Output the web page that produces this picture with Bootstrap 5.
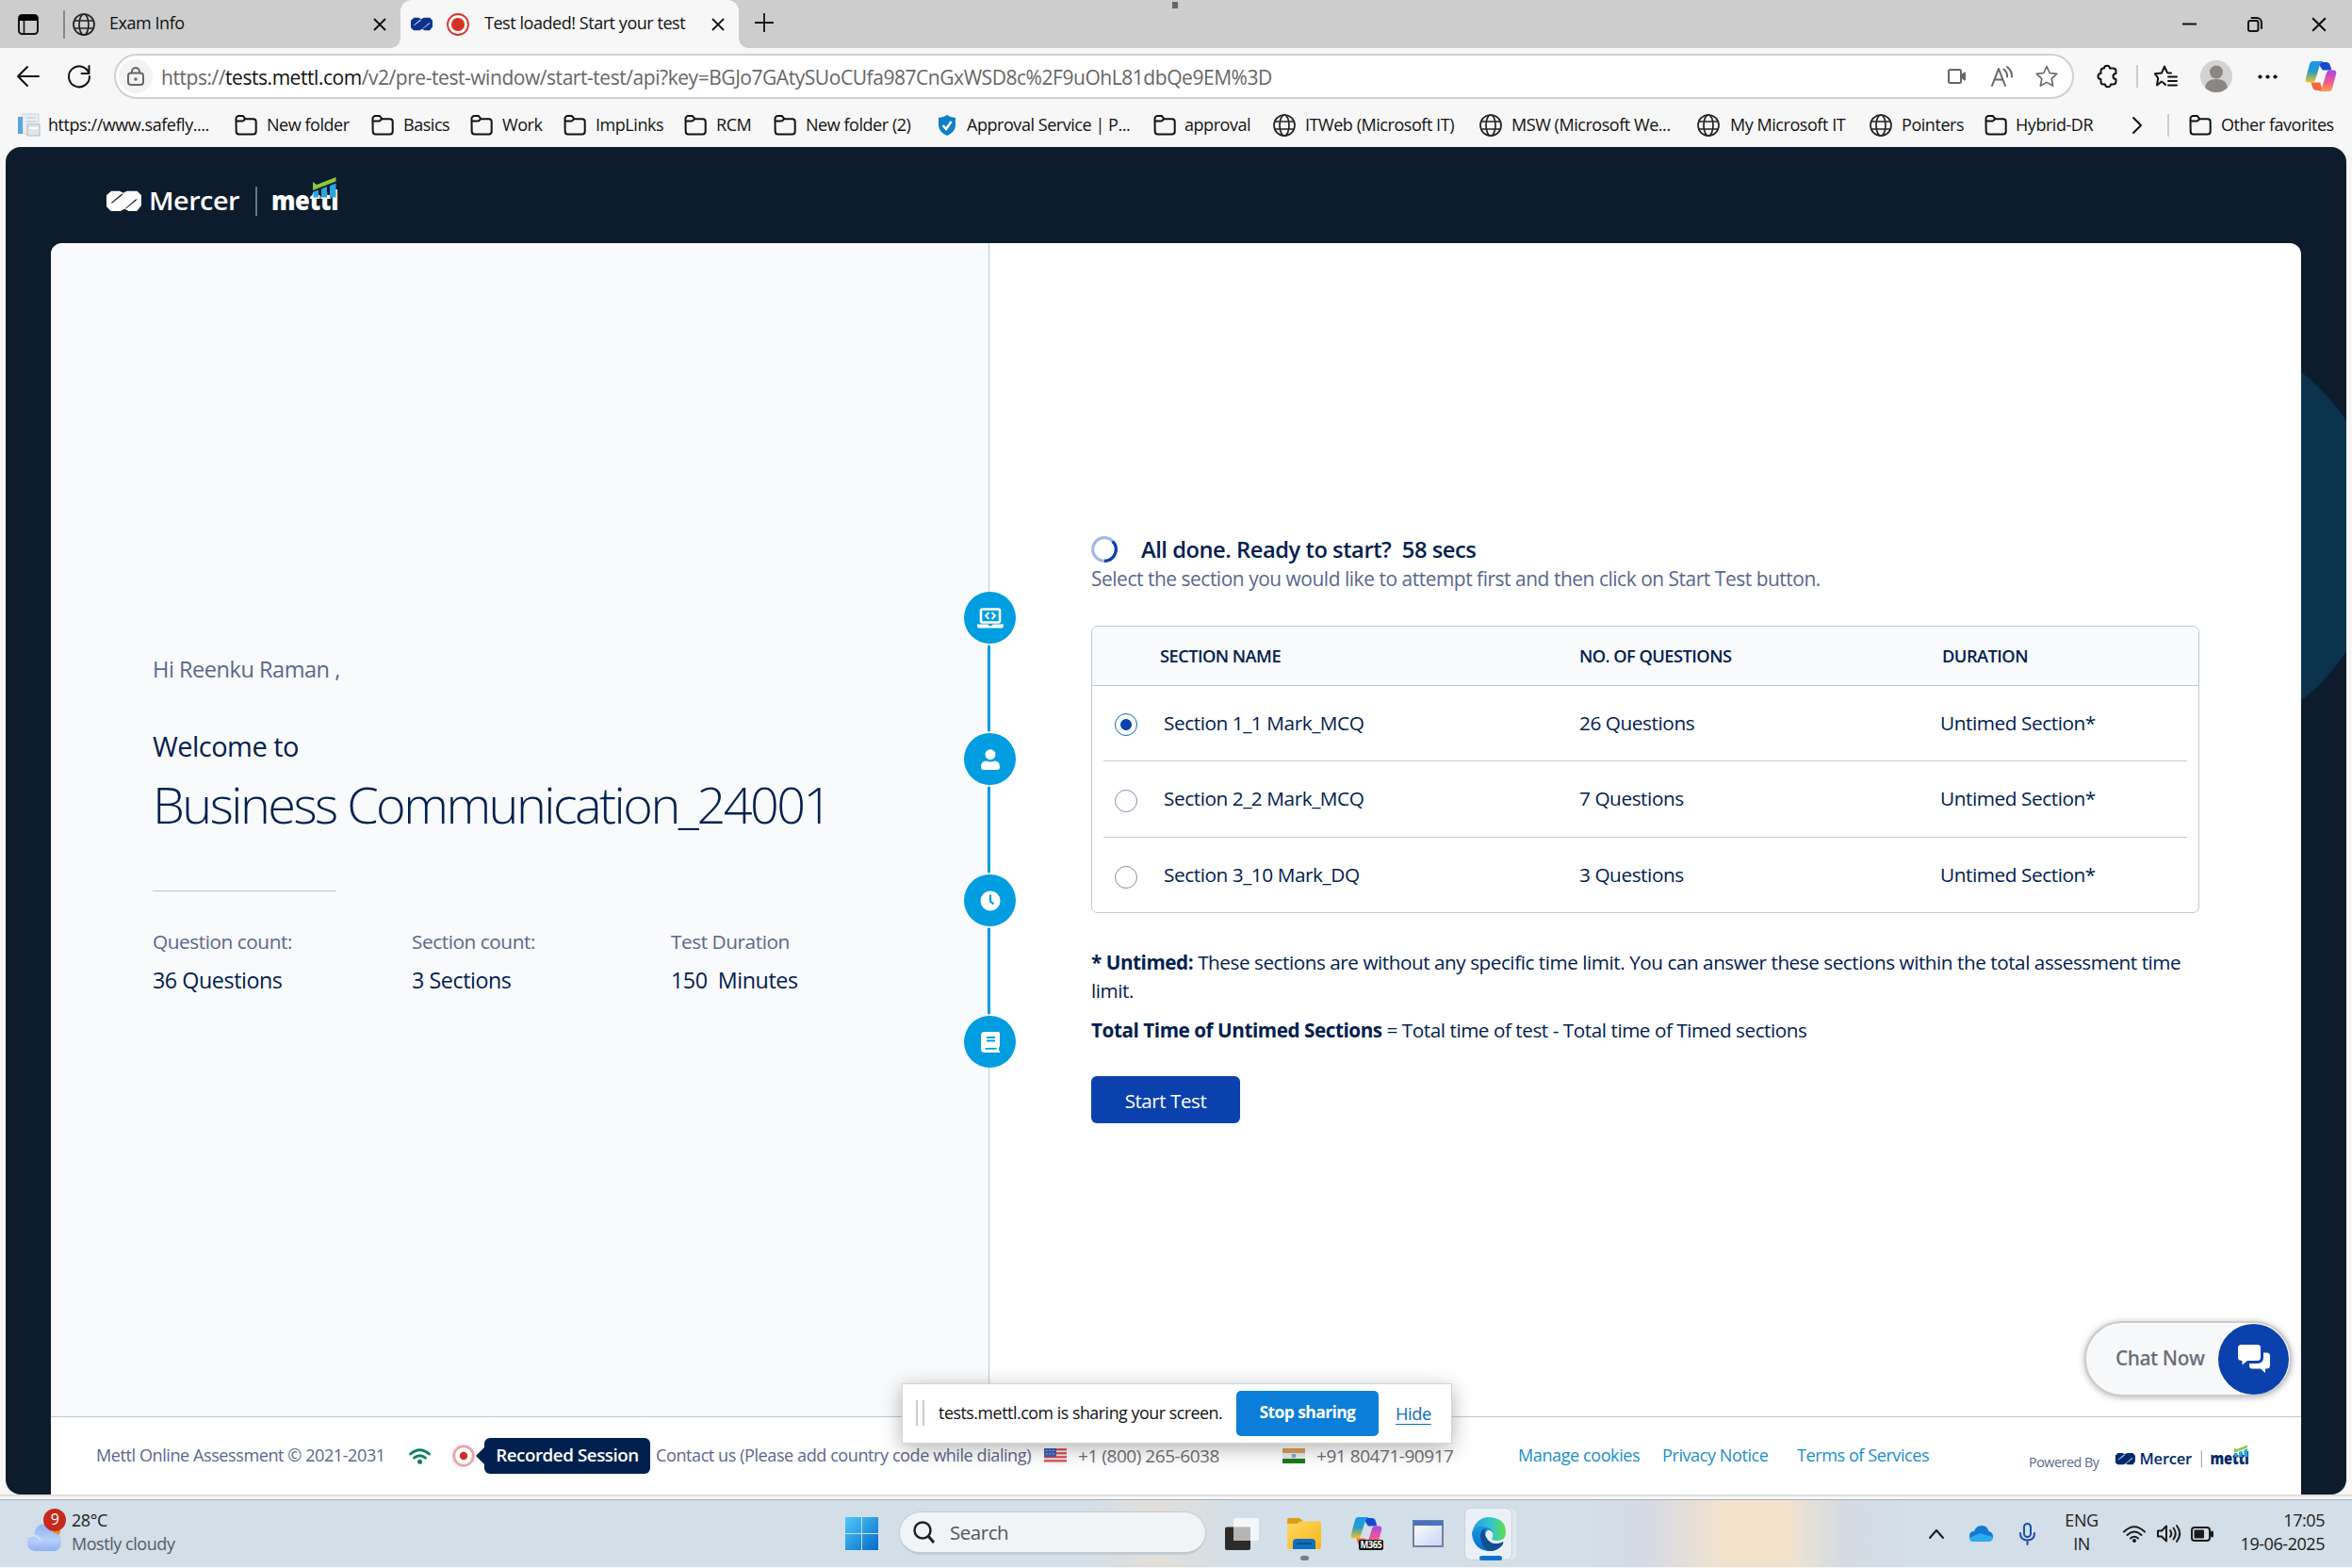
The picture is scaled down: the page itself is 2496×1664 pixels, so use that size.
<!DOCTYPE html>
<html lang="en">
<head>
<meta charset="utf-8">
<meta name="viewport" content="width=device-width, initial-scale=1">
<title>Test loaded! Start your test</title>
<link href="https://cdn.jsdelivr.net/npm/bootstrap@5.3.0/dist/css/bootstrap.min.css" rel="stylesheet">
<style>
  body { width: 2496px; height: 1664px; overflow: hidden; background: #f7f7f7; color: #00204e;
    font-family: "Open Sans", "Noto Sans", sans-serif; font-size: 18px; line-height: 1.3; letter-spacing: -.025em; white-space: nowrap; }
  svg { display: block; flex: none; overflow: visible; }
  .ln { fill: none; stroke: currentColor; stroke-width: 2; stroke-linecap: round; stroke-linejoin: round; }
  .lay { display: grid; align-items: center; justify-content: start; }
  .lay > * { min-width: 0; }

  /* browser chrome */
  .tabstrip { height: 51px; background: #cdcdcd; color: #111; grid-template-columns: 19px 48px 10px 39px 280px 29px 359px 17px 1515px 69px 68px 30px; }
  .tabstrip span:not(:empty) { margin-top: -2px; }
  .tab-live { height: 51px; background: #f7f7f7; border-radius: 12px 12px 0 0; grid-template-columns: 11px 38px 40px 241px 20px; }
  .tab-live::before, .tab-live::after { content: ""; position: absolute; bottom: 0; width: 10px; height: 10px; }
  .tab-live::before { left: -10px; background: radial-gradient(circle at 0 0, transparent 9.5px, #f7f7f7 10px); }
  .tab-live::after { right: -10px; background: radial-gradient(circle at 100% 0, transparent 9.5px, #f7f7f7 10px); }
  .top-mark { left: 1244px; top: 2px; width: 6px; height: 7px; background: #666; }
  .navrow { height: 60px; color: #111; grid-template-columns: 18px 54px 49px 2105px 41px 19px 49px 61px 50px 36px; }
  .omni { width: 2080px; height: 48px; border: 2px solid #d0d0d0; border-radius: 24px; background: #fff; color: #666; font-size: 21px; grid-template-columns: 3px 45px 1896px 46px 47px 26px; }
  .omni b { font-weight: 400; color: #111; }
  .lock { width: 36px; height: 36px; background: #f3f3f3; }
  .bookmarks { height: 44px; color: #111; padding-left: 18px; grid-template-columns:
    33px 198px 34px 111px 34px 71px 34px 65px 34px 94px 34px 61px 34px 140px 31px 198px 33px 94px 34px 185px 34px 197px 35px 148px 34px 88px 33px 124px 37px 23px 34px 118px; }
  .vbar { width: 2px; background: #ccc; }

  /* test page */
  .stage { height: 1430px; margin: 1px 6px 0; background: #0d1c2c; border-radius: 16px; overflow: hidden; padding: 0 48px; }
  .orb { width: 442px; height: 442px; left: 2079px; top: 192px; background: #0c334d; }
  .brand { height: 102px; padding: 24px 0 0 51px; }
  .sheet { height: 1328px; background: #fff; border-radius: 12px 12px 0 0; }
  .welcome { flex: 0 0 996px; background: #f9fafc; border-right: 1px solid #b9cad6; border-radius: 12px 0 0 0; padding: 435px 0 0 108px; }
  .muted-ink { color: #5a678c; }
  .hi { font-size: 23.5px; line-height: 34px; }
  .wel { font-size: 29px; line-height: 40px; margin-top: 45px; letter-spacing: -.018em; }
  .ttl { font-size: 54px; line-height: 70px; font-weight: 300; margin-top: 6px; letter-spacing: -.047em; }
  .short-rule { width: 195px; height: 1px; background: #b3c5d2; margin: 57px 0 36px; }
  .stats { grid-template-columns: 275px 275px 200px; }
  .stats .k { font-size: 20.8px; line-height: 34px; margin-bottom: 7px; }
  .stats .v { font-size: 23.3px; line-height: 34px; }
  .steps { left: 969px; top: 370px; width: 55px; }
  .stepdot { width: 55px; height: 55px; background: #009de0; color: #fff; }
  .stepline { width: 3px; height: 91px; margin: 2px 3px 2px 0; background: #009de0; }
  .start { padding: 310px 109px 0 108px; flex: 1; }
  .spin { width: 28px; height: 28px; margin-right: 25px; }
  .ready { font-size: 23.7px; font-weight: 600; line-height: 30px; }
  .pick { font-size: 20.9px; line-height: 30px; margin-top: 1px; }
  .sections { margin-top: 35px; width: 1176px; height: 305px; border: 1px solid #b9cad6; border-radius: 7px; font-size: 20.8px; overflow: hidden; }
  .sec-head { height: 63px; background: #f8fafc; border-bottom: 1px solid #b9cad6; font-size: 18.3px; font-weight: 600; padding: 0 0 1px 72px; grid-template-columns: 445px 385px 200px; letter-spacing: -.03em; }
  .sec-row { height: 80px; margin: 0 12px; border-bottom: 1px solid #b9cad6; padding: 3px 0 0 12px; grid-template-columns: 52px 441px 383px 200px; }
  .sec-row span { margin-top: -3px; }
  .sec-row:nth-child(3) { height: 81px; }
  .sec-row:last-child { border: 0; }
  .pickdot { appearance: none; width: 24px; height: 24px; border: 1px solid #8590a6; border-radius: 50%; margin: 0; background: #fff; }
  .pickdot:checked { border-color: #0f6ba0; background: radial-gradient(circle, #0b41ad 5.5px, #fff 6.3px); }
  .note { font-size: 20.7px; line-height: 30px; }
  .go { width: 158px; height: 50px; background: #0b41ad; color: #fff; border-radius: 6px; font-size: 20.5px; letter-spacing: -.02em; padding: 2px 0 0; border: 0; }
  .chat { right: 10px; top: 1144px; width: 220px; height: 80px; border-radius: 40px; background: #f8f9fb; border: 2px solid #ccc; box-shadow: 0 1px 7px rgba(0,0,0,.3); font-size: 20.8px; font-weight: 600; color: #6a6f78; padding: 0 1px 0 31px; }
  .chat-dot { width: 75px; height: 75px; background: #0b41ad; color: #fff; }
  .foot { height: 83px; border-top: 1px solid #b9cad6; font-size: 18.1px; padding-left: 48px;
    grid-template-columns: 332px 46px 216px 412px 36px 217px 36px 214px 153px 143px 246px 92px 145px; }
  .foot .tel { font-size: 19px; color: #6c6f75; }
  .foot a { color: #1b8fc9; text-decoration: none; }
  .rec-tip { left: 34px; top: -7px; width: 176px; height: 38px; border-radius: 6px; background: #002050; color: #fff; font-weight: 600; font-size: 18.8px; padding-bottom: 2px; }
  .rec-tip::before { content: ""; position: absolute; left: -9px; top: 9px; border: 10px solid transparent; border-left: 0; border-right-color: #002050; }
  .foot .powered { font-size: 14.3px; padding-top: 15px; }

  .share { left: 957px; top: 1468px; width: 584px; height: 64px; background: #fff; border: 1px solid #d5d5d5; box-shadow: 0 5px 22px rgba(0,0,0,.3); color: #111; font-size: 17.8px; grid-template-columns: 14px 24px 316px 169px 50px; padding-bottom: 1px; }
  .grip { width: 9px; height: 27px; border: solid #ccc; border-width: 0 2px; }
  .stop { width: 151px; height: 48px; background: #0a7ed8; color: #fff; border-radius: 5px; font-size: 17.5px; font-weight: 700; padding: 0 0 2px; border: 0; letter-spacing: -.035em; }
  .share a { color: #0f6cbd; font-size: 18.3px; text-underline-offset: 4px; }

  /* taskbar */
  .frame-edge { height: 6px; background: linear-gradient(#dedede 0 2px, #f7f7f7 2px 5px, #a9aeb2 5px); }
  .taskbar { height: 71px; color: #1b1b1b; padding-left: 29px;
    background: linear-gradient(90deg, transparent 1690px, rgba(214,214,228,.6) 1745px, #f3e3cd 1830px, #f3e3cd 1895px, rgba(214,214,224,.5) 1955px, transparent 2020px),
      linear-gradient(90deg, transparent 1160px, #e2dfda 1225px, transparent 1310px), #d2dee8;
    grid-template-columns: 47px 821px 57px 346px 66px 66px 67px 55px 493px 43px 53px 48px 62px 36px 36px 32px 110px; }
  .searchpill { width: 326px; height: 46px; margin-top: -1px; border-radius: 23px; background: #f1f4f7; border: 2px solid #c3ccd3; border-width: 1px 1px 3px; color: #555; font-size: 20.5px; padding-left: 14px; gap: 16px; }
  .alert-count { left: 17px; top: -7px; width: 24px; height: 24px; background: #c42b1c; color: #fff; font-size: 16px; }
  .two { line-height: 25px; margin-top: -4px; }
  .edge-tile { width: 51px; height: 56px; border-radius: 7px; background: #eaf0f6; border: 1px solid #c8d2dc; box-shadow: 5px 0 0 -1px #e0e8ef; }
  .run-pill { left: 15px; bottom: -1px; width: 24px; height: 5px; background: #0a74d0; border-radius: 3px; }
  .run-dot { left: 14px; top: 40px; width: 9px; height: 5px; background: #777f86; border-radius: 3px; }
</style>
</head>
<body class="d-flex flex-column">
<svg width="0" height="0" class="position-absolute">
  <defs>
    <symbol id="globe" viewBox="0 0 24 24"><g fill="none" stroke="#222" stroke-width="1.7"><circle cx="12" cy="12" r="11"/><ellipse cx="12" cy="12" rx="5" ry="11"/><path d="M2 8h20M2 16h20"/></g></symbol>
    <symbol id="folder" viewBox="0 0 24 24"><path d="M1.5 6V5a3 3 0 0 1 3-3h4.200l3 3.300h8a3 3 0 0 1 3 3v10.200a3 3 0 0 1-3 3h-15a3 3 0 0 1-3-3zM1.500 7.500h6.500q1 0 1.600-.700l1.600-1.500" fill="none" stroke="#111" stroke-width="2"/></symbol>
    <symbol id="cross" viewBox="0 0 14 14"><path d="M1 1l12 12M13 1L1 13" stroke="#111" stroke-width="1.900"/></symbol>
    <symbol id="merc" viewBox="0 0 110 64"><path fill="currentColor" fill-rule="evenodd" d="M16 0H40L53 7L66 0H96L110 14V46L96 64H70L57 57L44 64H14L0 50V14ZM13 39L19 38L48 15L54 8L46 11ZM56 58L63 55L92 32L98 25L90 28Z"/></symbol>
    <symbol id="logo" viewBox="0 0 260 56">
      <svg x="8" y="22.500" width="37" height="21.500"><use href="#merc"/></svg>
      <text x="53" y="43" font-size="27.500" font-weight="600" textLength="96" lengthAdjust="spacingAndGlyphs" fill="currentColor">Mercer</text>
      <path d="M167 18v31" stroke="currentColor" stroke-width="1" opacity=".8"/>
      <text x="183" y="43" font-size="29" font-weight="800" textLength="71" lengthAdjust="spacingAndGlyphs" fill="currentColor">mettl</text>
      <path fill="#2aa5de" d="M227.500 23.500l5.500-2V29.500h-5.500zM236 20.500l6-2.500v11.500h-6zM245 17l6.500-2.500V29.500h-6.500z"/>
      <path fill="#8cc63f" d="M227 13l4 3L251.500 8v4.500L227 22z"/>
    </symbol>
    <linearGradient id="win" x1="0" y1="0" x2="1" y2="1"><stop stop-color="#4ccbfb"/><stop offset="1" stop-color="#0669c8"/></linearGradient>
    <linearGradient id="cpa" x1="0" y1="0" x2="0" y2="1"><stop stop-color="#1698f0"/><stop offset=".5" stop-color="#2b9fc0"/><stop offset="1" stop-color="#f5c521"/></linearGradient>
    <linearGradient id="cpb" x1="0" y1="0" x2="0" y2="1"><stop stop-color="#a04be8"/><stop offset=".55" stop-color="#f4588f"/><stop offset="1" stop-color="#ff9a4a"/></linearGradient>
    <symbol id="copilot" viewBox="0 0 36 34">
      <path d="M14 1H24c3 0 4 2 5 5l1 4H20z" fill="#1a49d0"/>
      <path d="M9 0H21c-3 1-4 3-5 7l-4 13c-1 3-2 4-5 4H4c-3 0-4-2-3-5L5 4c1-3 2-4 4-4z" fill="url(#cpa)"/>
      <path d="M7 24H17l3 9H13c-3 0-4-2-5-5z" fill="#f2683c"/>
      <path d="M27 34H15c3-1 4-3 5-7l4-13c1-3 2-4 5-4h3c3 0 4 2 3 5L31 30c-1 3-2 4-4 4z" fill="url(#cpb)"/>
    </symbol>
    <linearGradient id="sky" x1="0" y1="0" x2="0" y2="1"><stop stop-color="#8fb4f3"/><stop offset=".6" stop-color="#b6cffa"/><stop offset="1" stop-color="#8eb0f0"/></linearGradient>
    <linearGradient id="fold" x1="0" y1="0" x2="1" y2="1"><stop stop-color="#ffd75e"/><stop offset="1" stop-color="#f7b61b"/></linearGradient>
    <linearGradient id="edgeA" x1="0" y1="0" x2="1" y2="0"><stop stop-color="#1f9fe0"/><stop offset=".55" stop-color="#32c6cf"/><stop offset="1" stop-color="#62dd4c"/></linearGradient>
    <linearGradient id="edgeB" x1="0" y1="0" x2="0" y2="1"><stop stop-color="#1a94dc"/><stop offset="1" stop-color="#0b6fd0"/></linearGradient>
    <linearGradient id="pane" x1="0" y1="0" x2="1" y2="1"><stop stop-color="#fff"/><stop offset="1" stop-color="#c5d4f3"/></linearGradient>
  </defs>
</svg>

<header>
  <div class="tabstrip lay position-relative">
    <span></span>
    <svg width="22" height="22" viewBox="0 0 22 22"><rect x="1" y="1" width="20" height="20" rx="3.500" fill="none" stroke="#111" stroke-width="2"/><path d="M1 7V4a3 3 0 0 1 3-3h14a3 3 0 0 1 3 3v3z"/><path d="M6.500 6v15" stroke="#111" stroke-width="1.600"/></svg>
    <span class="vbar" style="height:30px;background:#888"></span>
    <svg width="24" height="24"><use href="#globe"/></svg>
    <span>Exam Info</span>
    <svg width="14" height="14"><use href="#cross"/></svg>
    <div class="tab-live lay position-relative">
      <span></span>
      <svg width="23" height="15" color="#0a3490"><use href="#merc"/></svg>
      <svg width="24" height="24"><circle cx="12" cy="12" r="11" fill="none" stroke="#d93025" stroke-width="1.800"/><circle cx="12" cy="12" r="7" fill="#d93025"/></svg>
      <span>Test loaded! Start your test</span>
      <svg width="14" height="14"><use href="#cross"/></svg>
    </div>
    <span></span>
    <svg width="20" height="20" style="margin-top:-4px"><path d="M10 0v20M0 10h20" stroke="#111" stroke-width="1.800"/></svg>
    <svg width="15" height="15"><path d="M0 7.500h15" stroke="#111" stroke-width="2"/></svg>
    <svg width="16" height="16" class="ln"><rect x="1" y="4" width="10.500" height="11" rx="2"/><path d="M4.500 1h5.500a5 5 0 0 1 5 5v6"/></svg>
    <svg width="16" height="16"><use href="#cross"/></svg>
    <i class="top-mark position-absolute"></i>
  </div>

  <div class="navrow lay">
    <span></span>
    <svg width="24" height="22" class="ln"><path d="M23 11H1M11 1L1 11l10 10"/></svg>
    <svg width="24" height="24" class="ln"><path d="M22.500 9A11 11 0 1 0 23 12M22.500 1v8h-8"/></svg>
    <div class="omni lay">
      <span></span>
      <span class="lock rounded-circle d-flex align-items-center justify-content-center"><svg width="18" height="20" class="ln"><rect x="1" y="6.500" width="16" height="12.500" rx="3"/><path d="M5 6.500V5a4 4 0 0 1 8 0v1.500"/><circle cx="9" cy="13" r=".7"/></svg></span>
      <span class="pt-1">https://<b>tests.mettl.com</b>/v2/pre-test-window/start-test/api?key=BGJo7GAtySUoCUfa987CnGxWSD8c%2F9uOhL81dbQe9EM%3D</span>
      <svg width="19" height="16" class="ln"><rect x="1" y="1" width="13" height="14" rx="1.500"/><path d="M15 7l3-2.500v7L15 9z" fill="#666"/></svg>
      <svg width="23" height="22" class="ln" stroke-width="1.500"><path d="M1 21L8 3l7 18M4 14.500h8M13.500 3.500q4 3.500 3.500 8M17 1q5.500 4.500 5 10.500"/></svg>
      <svg width="24" height="24" class="ln"><path d="M12 1.500l3.200 7 7.600.9-5.600 5.200 1.500 7.500-6.700-3.700-6.700 3.700 1.500-7.500L1.200 9.400l7.600-.9z" stroke-width="1.600"/></svg>
    </div>
    <svg width="23" height="24" class="ln"><path d="M7 3.500a3 2.800 0 0 1 6 0h3.500q3 0 3 3V9a3 3 0 0 0 0 6v2.500q0 3-3 3H14a3 2.700 0 0 1-6 0H6q-2.500 0-2.500-3V15a3 3 0 0 1 0-6V6.500q0-3 2.500-3z"/></svg>
    <span class="vbar" style="height:24px"></span>
    <svg width="25" height="24" class="ln"><path d="M8 17.500l-5 4 1.200-7.500L1 9.300l7-.9L11 1.500l3 6.700 4 .3M12 21l-2.500-2.500M15 12.500h9M15 17h9M15 21.500h9"/></svg>
    <svg width="34" height="34"><circle cx="17" cy="17" r="17" fill="#d5d2cf"/><circle cx="17" cy="12.500" r="7" fill="#8a8683"/><path d="M5 29q1-9 12-9t12 9q-5 5-12 5T5 29z" fill="#8a8683"/></svg>
    <svg width="21" height="5"><circle cx="2.500" cy="2.500" r="2.100"/><circle cx="10.500" cy="2.500" r="2.100"/><circle cx="18.500" cy="2.500" r="2.100"/></svg>
    <svg width="34" height="32"><use href="#copilot"/></svg>
  </div>

  <div class="bookmarks lay">
    <svg width="25" height="24"><rect x="6" y="0" width="17" height="21" fill="#e9eef2" stroke="#cfd8de"/><rect x="1" y="3" width="5" height="18" fill="#5aa5d8"/><path d="M10 4h10M10 8h10" stroke="#b9c6cf"/><rect x="11" y="11" width="13" height="12" fill="#dfe6ea" stroke="#aebac2"/><path d="M13 15h9" stroke="#fff" stroke-width="2"/></svg><span>https://www.safefly....</span>
    <svg width="24" height="24"><use href="#folder"/></svg><span>New folder</span>
    <svg width="24" height="24"><use href="#folder"/></svg><span>Basics</span>
    <svg width="24" height="24"><use href="#folder"/></svg><span>Work</span>
    <svg width="24" height="24"><use href="#folder"/></svg><span>ImpLinks</span>
    <svg width="24" height="24"><use href="#folder"/></svg><span>RCM</span>
    <svg width="24" height="24"><use href="#folder"/></svg><span>New folder (2)</span>
    <svg width="20" height="22"><path d="M10 0q4 3 9 3v8q0 7-9 11Q1 18 1 11V3q5 0 9-3z" fill="#0f7fc9"/><path d="M5.500 11l3.500 4 5.500-8" fill="none" stroke="#fff" stroke-width="2.600"/></svg><span>Approval Service | P...</span>
    <svg width="24" height="24"><use href="#folder"/></svg><span>approval</span>
    <svg width="24" height="24"><use href="#globe"/></svg><span>ITWeb (Microsoft IT)</span>
    <svg width="24" height="24"><use href="#globe"/></svg><span>MSW (Microsoft We...</span>
    <svg width="24" height="24"><use href="#globe"/></svg><span>My Microsoft IT</span>
    <svg width="24" height="24"><use href="#globe"/></svg><span>Pointers</span>
    <svg width="24" height="24"><use href="#folder"/></svg><span>Hybrid-DR</span>
    <svg width="10" height="18" class="ln"><path d="M1 1l8 8-8 8"/></svg><span class="vbar" style="height:24px"></span>
    <svg width="24" height="24"><use href="#folder"/></svg><span>Other favorites</span>
  </div>
</header>

<main class="stage position-relative">
  <div class="orb position-absolute rounded-circle"></div>
  <div class="brand text-white"><svg width="260" height="56"><use href="#logo"/></svg></div>

  <div class="sheet position-relative d-flex flex-column">
    <div class="d-flex flex-grow-1">
      <section class="welcome">
        <div class="hi muted-ink">Hi Reenku Raman ,</div>
        <div class="wel">Welcome to</div>
        <h1 class="ttl mb-0">Business Communication_24001</h1>
        <div class="short-rule"></div>
        <div class="stats lay">
          <div><div class="k muted-ink">Question count:</div><div class="v">36 Questions</div></div>
          <div><div class="k muted-ink">Section count:</div><div class="v">3 Sections</div></div>
          <div><div class="k muted-ink">Test Duration</div><div class="v">150 &nbsp;Minutes</div></div>
        </div>
      </section>

      <section class="start">
        <div class="d-flex align-items-center">
          <svg class="spin" viewBox="0 0 28 28"><circle cx="14" cy="14" r="12.300" fill="none" stroke="#a5b8e2" stroke-width="3.200"/><path d="M22.700 5.300A12.300 12.300 0 0 1 14 26.300" fill="none" stroke="#0b41ad" stroke-width="3.200"/></svg>
          <span class="ready">All done. Ready to start? &nbsp;58 secs</span>
        </div>
        <div class="pick muted-ink">Select the section you would like to attempt first and then click on Start Test button.</div>
        <div class="sections">
          <div class="sec-head lay"><span>SECTION NAME</span><span>NO. OF QUESTIONS</span><span>DURATION</span></div>
          <label class="sec-row lay"><input class="pickdot" type="radio" name="section" checked><span>Section 1_1 Mark_MCQ</span><span>26 Questions</span><span>Untimed Section*</span></label>
          <label class="sec-row lay"><input class="pickdot" type="radio" name="section"><span>Section 2_2 Mark_MCQ</span><span>7 Questions</span><span>Untimed Section*</span></label>
          <label class="sec-row lay"><input class="pickdot" type="radio" name="section"><span>Section 3_10 Mark_DQ</span><span>3 Questions</span><span>Untimed Section*</span></label>
        </div>
        <div class="note" style="margin-top:37px"><b>* Untimed:</b> These sections are without any specific time limit. You can answer these sections within the total assessment time<br>limit.</div>
        <div class="note" style="margin:12px 0 34px"><b>Total Time of Untimed Sections</b> = Total time of test - Total time of Timed sections</div>
        <button class="btn go" type="button">Start Test</button>
      </section>
    </div>

    <div class="steps position-absolute d-flex flex-column align-items-center">
      <span class="stepdot rounded-circle d-flex align-items-center justify-content-center"><svg width="28" height="24"><rect x="4" y="2.500" width="20" height="14" rx="1.500" fill="none" stroke="#fff" stroke-width="2.600"/><path d="M12.500 6L9 9.500l3.500 3.500M15.500 6L19 9.500 15.500 13" fill="none" stroke="#fff" stroke-width="2"/><path d="M0 18.500h11.500l1 1.500h3l1-1.500H28v1.500q0 2.500-2.500 2.500h-23Q0 22.500 0 20z" fill="#fff"/></svg></span>
      <span class="stepline"></span>
      <span class="stepdot rounded-circle d-flex align-items-center justify-content-center"><svg width="20" height="22"><circle cx="10" cy="5.700" r="5.500" fill="#fff"/><path d="M0 19q0-6.500 5.500-6.500 4.500 2 9 0Q20 12.500 20 19q0 3-2.500 3h-15Q0 22 0 19z" fill="#fff"/></svg></span>
      <span class="stepline"></span>
      <span class="stepdot rounded-circle d-flex align-items-center justify-content-center"><svg width="22" height="22"><circle cx="11" cy="11" r="10.500" fill="#fff"/><path d="M11 4.500V11.500l3.500 3" fill="none" stroke="#009de0" stroke-width="2.200"/></svg></span>
      <span class="stepline"></span>
      <span class="stepdot rounded-circle d-flex align-items-center justify-content-center"><svg width="20" height="22"><path d="M4 0h14.500Q20 0 20 1.500v14l-1 1.200v2.800l1 1V22H4q-4 0-4-4V4q0-4 4-4z" fill="#fff"/><path d="M6 6h9M6 9.500h9M4.500 17.800h12" stroke="#009de0" stroke-width="1.800"/></svg></span>
    </div>

    <div class="chat position-absolute d-flex align-items-center justify-content-between">
      <span>Chat Now</span>
      <span class="chat-dot rounded-circle d-flex align-items-center justify-content-center"><svg width="34" height="30"><path d="M3.500 0h17Q24 0 24 3.500v10q0 3.500-3.500 3.500H10l-5.500 4.500V17Q0 17 0 13.500v-10Q0 0 3.500 0z" fill="#fff"/><path d="M27 8.500h3.500Q34 8.500 34 12v10q0 3.500-3.500 3.500H29V30l-5-4.500h-9q-3 0-3-3V20h8.500q6.500 0 6.500-6.500z" fill="#fff"/></svg></span>
    </div>

    <footer class="foot lay muted-ink">
      <span>Mettl Online Assessment © 2021-2031</span>
      <svg width="23" height="17" viewBox="0 0 23 17"><path d="M1.500 6q10-8.500 20 0M5.500 10.200q6-5 12 0" fill="none" stroke="#0c8255" stroke-width="2.800" stroke-linecap="round"/><circle cx="11.500" cy="14.200" r="2.500" fill="#0c8255"/></svg>
      <div class="position-relative"><svg width="24" height="24"><circle cx="12" cy="12" r="10.300" fill="none" stroke="#e8a9a9" stroke-width="3"/><circle cx="12" cy="12" r="4.200" fill="#c9302c"/></svg>
        <span class="rec-tip position-absolute d-flex align-items-center justify-content-center">Recorded Session</span></div>
      <span>Contact us (Please add country code while dialing)</span>
      <svg width="24" height="16"><rect width="24" height="16" fill="#f5e6e6"/><path d="M0 1.200h24M0 5.200h24M0 9.200h24M0 13.200h24" stroke="#d9444a" stroke-width="2"/><rect width="13" height="9" fill="#4560b5"/><path d="M2 2.500h10M2 6h10" stroke="#b9c5ea" stroke-dasharray="1.500 2"/></svg>
      <span class="tel">+1 (800) 265-6038</span>
      <svg width="24" height="16"><rect width="24" height="16" fill="#e9ebee"/><rect width="24" height="5" fill="#d9a05a"/><rect y="11" width="24" height="5" fill="#1d7a1d"/><circle cx="12" cy="8" r="2.300" fill="#8fa0cc"/></svg>
      <span class="tel">+91 80471-90917</span>
      <a href="#">Manage cookies</a><a href="#">Privacy Notice</a><a href="#">Terms of Services</a>
      <span class="powered">Powered By</span>
      <svg width="150" height="32.300" color="#012a6c" style="margin-left:-5px"><use href="#logo"/></svg>
    </footer>
  </div>
</main>

<div class="frame-edge"></div>
<footer class="taskbar lay">
  <div class="position-relative">
    <svg width="36" height="40"><circle cx="29" cy="17" r="6" fill="#f08a24"/><path d="M8 38q-8-1-8-9 0-7 7-8Q9 8 19 10q7 1 9 9 8 0 8 9 0 9-7 10z" fill="url(#sky)"/><path d="M2 23q6-4 12 3" fill="none" stroke="#d5e3fc" stroke-width="2"/></svg>
    <span class="alert-count position-absolute rounded-circle d-flex align-items-center justify-content-center">9</span>
  </div>
  <div class="two">28°C<br><span style="color:#555c63">Mostly cloudy</span></div>
  <svg width="35" height="35"><g fill="url(#win)"><path d="M0 0h17v17H0zM18 0h17v17H18zM0 18h17v17H0zM18 18h17v17H18z"/></g></svg>
  <div class="searchpill d-flex align-items-center"><svg width="23" height="24"><circle cx="10" cy="10" r="8.500" fill="none" stroke="#222" stroke-width="2.500"/><path d="M16 16l6 7" stroke="#222" stroke-width="3"/></svg><span>Search</span></div>
  <svg width="36" height="34"><rect x="0" y="9.500" width="27" height="24.500" rx="2" fill="#2b2b2b"/><rect x="9" y="0" width="27" height="24" rx="2" fill="#fafafa" opacity=".85"/><path d="M9 9.500h18V24H9z" fill="#b5b5b5"/></svg>
  <div class="position-relative"><svg width="36" height="33"><path d="M0 2q0-2 2-2h11l4 3.500-4 6H0z" fill="#dc9f13"/><path d="M0 6h10l4-2.500h20q2 0 2 2V31q0 2-2 2H2q-2 0-2-2z" fill="url(#fold)"/><path d="M6 33v-7q0-4 4-4h16q4 0 4 4v7z" fill="#0f6fc0"/><path d="M11 27h14" stroke="#0a4c8c" stroke-width="2" stroke-linecap="round"/></svg><i class="run-dot position-absolute"></i></div>
  <svg width="36" height="35"><use href="#copilot" width="36" height="32"/><rect x="10" y="24" width="26" height="11" rx="2" fill="#111"/><text x="11.500" y="33" font-size="10" font-weight="700" fill="#fff" textLength="23" lengthAdjust="spacingAndGlyphs">M365</text></svg>
  <svg width="33" height="29"><rect x="1" y="1" width="31" height="27" fill="url(#pane)" stroke="#70819c" stroke-width="2"/><path d="M1 1h31v5H1z" fill="#4b70c4"/></svg>
  <div class="edge-tile position-relative d-flex justify-content-center" style="padding-top:9px"><svg width="36" height="36" viewBox="0 0 36 36">
      <path d="M1 14A18 18 0 0 1 18 0q18 1 18 16 0 9-9 9-6 0-6-2.500 2-2 1-5.500-2-5-9-6-8-1-12 3z" fill="url(#edgeA)"/>
      <path d="M0 18q0-7 8-8 12-1 14.500 6.500Q17 11 14.500 17q-1.500 12 8.500 14 6 0 10-2-7 8-16 7Q2 34 0 18z" fill="url(#edgeB)"/>
      <path d="M9 20q0-7 6-8-3 4 0 9 4 8 12 7 4-.500 6-2 1 1-1 4-5 6-13 6Q10 34 9 20z" fill="#124f94"/>
    </svg><i class="run-pill position-absolute"></i></div>
  <svg width="16" height="10" class="ln"><path d="M1 9l7-8 7 8"/></svg>
  <svg width="25" height="17"><path d="M5 17q-5-1-5-6t5-5Q7 0 13 0q6 0 7.500 6 4.500 1 4.500 5.500T20 17z" fill="#1279d4"/><path d="M3 17q-3-1-3-4l11-5 14 4q-.500 5-5 5z" fill="#2fa9f0"/></svg>
  <svg width="17" height="24" class="ln" style="color:#1a4fa3"><rect x="5" y="1" width="7" height="14" rx="3.500"/><path d="M1 11q0 7.500 7.500 7.500T16 11M8.500 19v4"/></svg>
  <div class="two text-center" style="width:36px">ENG<br>IN</div>
  <svg width="24" height="18" class="ln"><path d="M1 6.500q11-10.500 22 0M4.500 10q7.500-7 15 0M8 13.500q4-3.500 8 0"/><circle cx="12" cy="16" r="1"/></svg>
  <svg width="25" height="19" class="ln" stroke-width="1.600"><path d="M1 6.500h4L10 1.500v16L5 12.500H1zM14 6q2.500 3.500 0 7M17.500 3.500q4.500 6 0 12M21 1q6.500 8.500 0 17"/></svg>
  <svg width="25" height="16" class="ln"><rect x="1" y="1" width="19" height="14" rx="3"/><path d="M22.500 6v4" stroke-width="3"/><rect x="4.500" y="4.500" width="8.500" height="7" fill="#1b1b1b"/></svg>
  <div class="two text-end">17:05<br>19-06-2025</div>
</footer>

<aside class="share lay position-absolute">
  <span></span><span class="grip"></span><span>tests.mettl.com is sharing your screen.</span><button class="btn stop" type="button">Stop sharing</button><a href="#">Hide</a>
</aside>
<script src="https://cdn.jsdelivr.net/npm/bootstrap@5.3.0/dist/js/bootstrap.bundle.min.js"></script>
</body>
</html>
